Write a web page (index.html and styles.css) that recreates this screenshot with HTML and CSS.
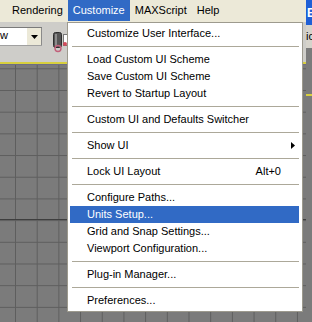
FILE: index.html
```html
<!DOCTYPE html>
<html lang="en">
<head>
    <meta charset="UTF-8">
    <title>Customize Menu</title>
    <link rel="stylesheet" href="styles.css">
</head>
<body>
    <div class="screen">
        <div class="app">
            <div class="menubar">
                <span class="menu-title">Rendering</span>
                <span class="menu-title active">Customize</span>
                <span class="menu-title">MAXScript</span>
                <span class="menu-title">Help</span>
            </div>
            <div class="toolbar">
                <div class="combo">
                    <span class="combo-text">w</span>
                    <span class="combo-btn">
                        <svg width="7" height="4" viewBox="0 0 7 4"><path d="M0 0h7L3.5 4z" fill="#000"/></svg>
                    </span>
                </div>
                <svg class="tool-icon" width="15" height="22" viewBox="0 0 15 22">
                    <rect x="1.5" y="1.5" width="8" height="15" rx="2" fill="#555" stroke="#2e2e2e"/>
                    <rect x="3" y="3" width="2" height="12" fill="#8c8c8c"/>
                    <circle cx="6" cy="17.5" r="3" fill="none" stroke="#c2607a" stroke-width="1.4"/>
                    <rect x="11.5" y="3.5" width="5" height="11" fill="#fff" stroke="#777"/>
                    <circle cx="13" cy="13" r="2" fill="#d24a5a"/>
                </svg>
            </div>
            <div class="viewport-edge"></div>
            <div class="viewport"></div>
        </div>
        <div class="side">
            <div class="side-title">E</div>
            <div class="side-panel">ic</div>
            <div class="side-view"></div>
        </div>

        <div class="dropdown">
            <div class="item">Customize User Interface...</div>
            <div class="sep"></div>
            <div class="item">Load Custom UI Scheme</div>
            <div class="item">Save Custom UI Scheme</div>
            <div class="item">Revert to Startup Layout</div>
            <div class="sep"></div>
            <div class="item">Custom UI and Defaults Switcher</div>
            <div class="sep"></div>
            <div class="item item-sub">Show UI
                <svg width="4" height="7" viewBox="0 0 4 7"><path d="M0 0L4 3.5L0 7z" fill="#000"/></svg>
            </div>
            <div class="sep"></div>
            <div class="item">Lock UI Layout <span class="shortcut">Alt+0</span></div>
            <div class="sep"></div>
            <div class="item">Configure Paths...</div>
            <div class="item selected">Units Setup...</div>
            <div class="item">Grid and Snap Settings...</div>
            <div class="item">Viewport Configuration...</div>
            <div class="sep"></div>
            <div class="item">Plug-in Manager...</div>
            <div class="sep"></div>
            <div class="item">Preferences...</div>
        </div>
    </div>
</body>
</html>
```

FILE: styles.css
```css
body {
    margin: 0;
    padding: 0;
    font-family: "Liberation Sans", Arial, sans-serif;
    font-size: 11px;
    color: #000;
    background-color: #7b7b7b;
}
.screen {
    position: relative;
    display: flex;
    width: 312px;
    height: 322px;
    overflow: hidden;
}
.app {
    width: 306px;
    display: flex;
    flex-direction: column;
}
.menubar {
    height: 22px;
    display: flex;
    padding-left: 7px;
    background-color: #ece9d8;
}
.menu-title {
    padding: 0 5px;
    height: 21px;
    line-height: 21px;
}
.menu-title.active {
    background-color: #316ac5;
    color: white;
}
.toolbar {
    height: 40px;
    display: flex;
    align-items: flex-start;
    background-color: #cecdc9;
}
.combo {
    display: flex;
    margin-top: 5px;
    height: 17px;
    border-top: 1px solid #7a7a7a;
    border-bottom: 1px solid #a0a0a0;
}
.combo-text {
    width: 26px;
    background-color: white;
    line-height: 15px;
}
.combo-btn {
    width: 16px;
    display: flex;
    align-items: center;
    justify-content: center;
    background-color: #ece9d8;
    border-left: 1px solid #fff;
    border-right: 1px solid #8a8a8a;
    box-sizing: border-box;
}
.tool-icon {
    margin-left: 10px;
    margin-top: 9px;
}
.viewport-edge {
    height: 1px;
    border-top: 2px solid #d7cf3e;
    background-color: #6f6e86;
}
.viewport {
    flex: 1;
    background-color: #7b7b7b;
    background-image:
        linear-gradient(to bottom, transparent 154px, #3e3e3e 154px, #3e3e3e 155px, transparent 155px),
        linear-gradient(to right, #5e5e5e 1px, transparent 1px),
        linear-gradient(to bottom, #5e5e5e 1px, transparent 1px);
    background-size: 100% 100%, 21.7px 21.7px, 21.7px 21.7px;
    background-position: 0 0, 15px 0, 0 3.3px;
    background-repeat: no-repeat, repeat, repeat;
}
.side {
    flex: 1;
    display: flex;
    flex-direction: column;
    overflow: hidden;
}
.side-title {
    height: 25px;
    line-height: 26px;
    background-color: #1f5fd6;
    color: white;
    font-weight: bold;
    font-size: 12px;
    padding-left: 1px;
}
.side-panel {
    height: 23px;
    line-height: 22px;
    background-color: #d6d3cb;
}
.side-view {
    flex: 1;
    background-color: #7b7b7b;
    background-image: linear-gradient(to bottom, transparent 46px, #d7cf3e 46px, #d7cf3e 48px, transparent 48px);
}
.dropdown {
    position: absolute;
    left: 67px;
    top: 22px;
    width: 229px;
    padding: 2px 3px 2px 2px;
    box-sizing: content-box;
    background-color: white;
    border: 1px solid #9d9a8e;
}
.item {
    height: 17px;
    line-height: 17px;
    padding: 0 18px 0 17px;
    display: flex;
    justify-content: space-between;
    align-items: center;
    white-space: nowrap;
}
.item-sub {
    padding-right: 4px;
}
.item.selected {
    background-color: #316ac5;
    color: white;
}
.sep {
    height: 1px;
    margin: 4px 0 4px 2px;
    background-color: #aca899;
}
```
